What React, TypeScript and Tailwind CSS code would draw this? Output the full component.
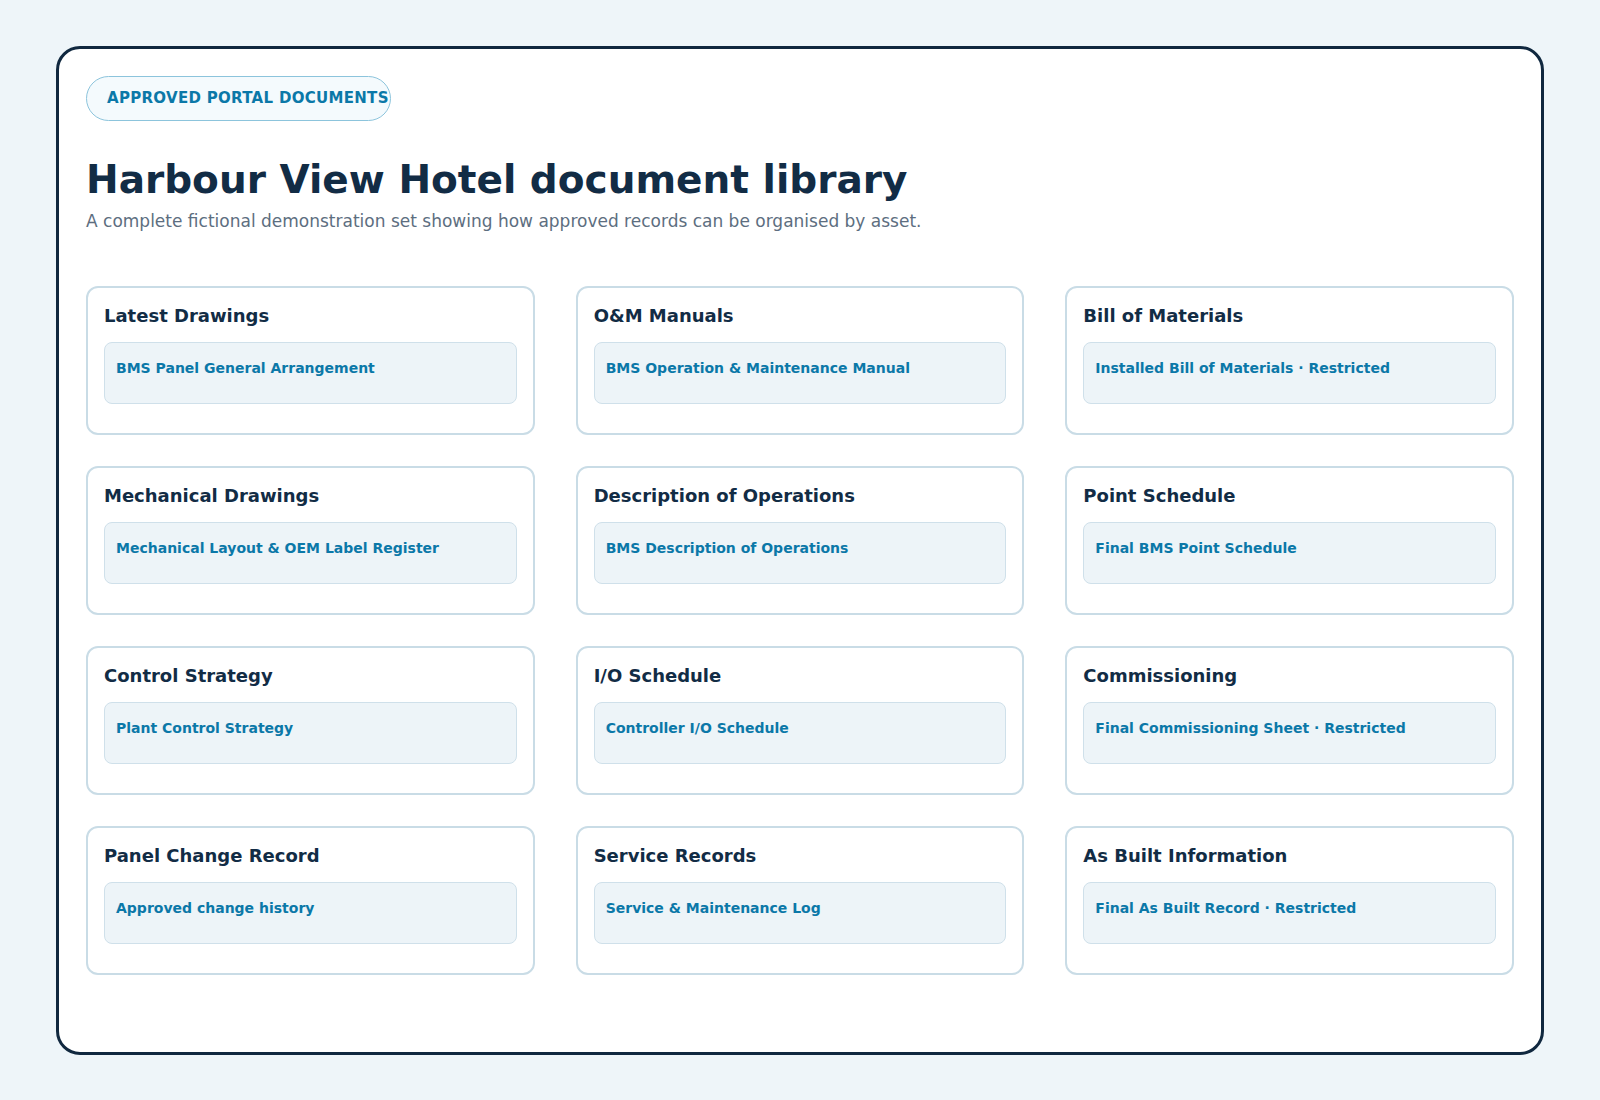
const cards = [
  ["Latest Drawings", "BMS Panel General Arrangement"],
  ["O&M Manuals", "BMS Operation & Maintenance Manual"],
  ["Bill of Materials", "Installed Bill of Materials · Restricted"],
  ["Mechanical Drawings", "Mechanical Layout & OEM Label Register"],
  ["Description of Operations", "BMS Description of Operations"],
  ["Point Schedule", "Final BMS Point Schedule"],
  ["Control Strategy", "Plant Control Strategy"],
  ["I/O Schedule", "Controller I/O Schedule"],
  ["Commissioning", "Final Commissioning Sheet · Restricted"],
  ["Panel Change Record", "Approved change history"],
  ["Service Records", "Service & Maintenance Log"],
  ["As Built Information", "Final As Built Record · Restricted"],
];

const App = () => {
  return (
    <div className="min-h-[1100px] bg-[#eef5f9] px-[56px] pt-[46px] pb-[46px]" style={{ fontFamily: '"DejaVu Sans", sans-serif' }}>
      <div className="rounded-[24px] border-[3px] border-[#10283f] bg-white px-[27px] pt-[27px] pb-[77px]">
        <div className="flex h-[45px] w-[305px] items-center rounded-full border border-[#8cc4dc] bg-[#f4fafd] px-5 whitespace-nowrap text-[15px] font-bold tracking-[0.3px] text-[#0b78a8]">
          APPROVED PORTAL DOCUMENTS
        </div>
        <h1 className="mt-[35px] text-[39px] font-bold leading-[48px] text-[#122c45]">
          Harbour View Hotel document library
        </h1>
        <p className="mt-[5px] text-[17px] text-[#5d6e80]">
          A complete fictional demonstration set showing how approved records can be organised by asset.
        </p>
        <div className="mt-[51px] grid grid-cols-3 gap-x-[41px] gap-y-[31px]">
          {cards.map(([title, doc]) => (
            <div key={title} className="h-[149px] rounded-[12px] border-2 border-[#c9dce6] px-[16px] pt-[16px]">
              <div className="text-[18px] font-bold leading-[24px] text-[#122c45]">{title}</div>
              <div className="mt-[14px] h-[62px] rounded-[8px] border border-[#cfe0ea] bg-[#edf4f8] px-[11px] pt-[15px] text-[14px] font-bold text-[#0b78a8]">
                {doc}
              </div>
            </div>
          ))}
        </div>
      </div>
    </div>
  );
};

export default App;
